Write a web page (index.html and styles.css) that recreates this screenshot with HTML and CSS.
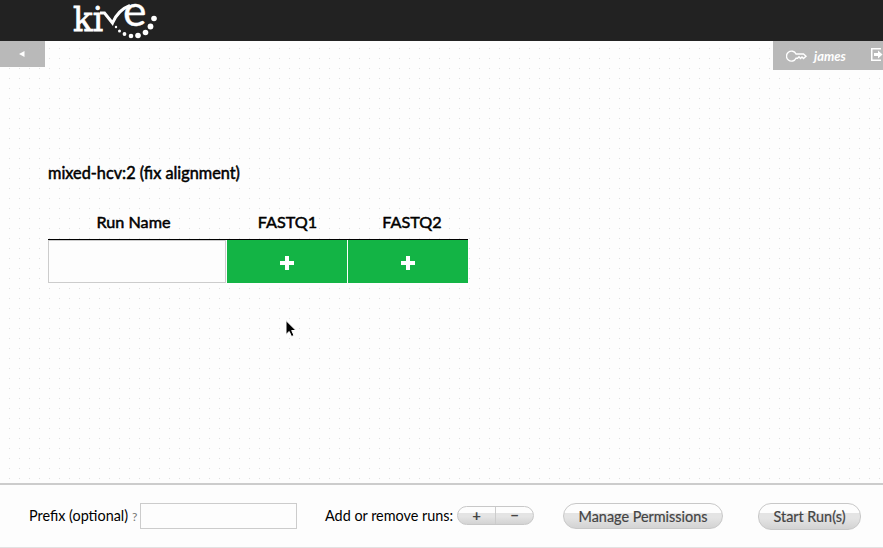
FILE: index.html
```html
<!DOCTYPE html>
<html lang="en">
<head>
<meta charset="utf-8">
<title>Kive</title>
<link rel="stylesheet" href="styles.css">
</head>
<body>
<header class="topbar">
  <svg class="logo" width="90" height="41" viewBox="70 0 90 41">
    <text class="logo-slab" x="73" y="30.500" textLength="30" lengthAdjust="spacingAndGlyphs">ki</text>
    <path d="M100 13h4.500L112.500 23Q118 10 130 5.500" fill="none" stroke="#fff" stroke-width="3"/>
    <text class="logo-e" x="123" y="25.500" textLength="23.500" lengthAdjust="spacingAndGlyphs">e</text>
    <g fill="#fff"><circle cx="116" cy="27" r="1.200"/><circle cx="119.500" cy="31" r="1.500"/><circle cx="124.500" cy="34" r="1.900"/><circle cx="131" cy="36" r="2.300"/><circle cx="138" cy="35.500" r="2.800"/><circle cx="145.500" cy="32.500" r="2.800"/><circle cx="150.500" cy="26.500" r="2.900"/><circle cx="154" cy="18.500" r="2.800"/></g>
  </svg>
</header>
<div class="subbar">
  <a class="back"><svg width="6" height="6" viewBox="0 0 6 6"><path d="M0 3L5.500 0v6z" fill="#fff"/></svg></a>
  <div class="user">
    <svg class="key" width="22" height="12" viewBox="0 0 22 12" fill="none" stroke="#fff" stroke-width="1.400"><path d="M10 4A5 5 0 1 0 10 8.300L11.500 8.300l1.500-1.500L14.500 8.500l1.500-1.500L17.500 8.500l2.500-2.300L17.500 4z"/></svg>
    <span class="name">james</span>
    <svg class="exit" width="12" height="13" viewBox="0 0 12 13"><path d="M10 .75H.75v11.500H10" fill="none" stroke="#fff" stroke-width="1.500"/><path d="M3 5h4V2.500L11.500 6.500 7 10.500V8H3z" fill="#fff"/></svg>
  </div>
</div>
<main class="content">
  <h1>mixed-hcv:2 (fix alignment)</h1>
  <table class="runs">
    <thead><tr><th class="c1">Run Name</th><th class="c2">FASTQ1</th><th class="c3">FASTQ2</th></tr></thead>
    <tbody><tr><td><div class="run-input"></div></td>
    <td><div class="add"><svg width="14" height="14"><path d="M5 0h4v5h5v4H9v5H5V9H0V5h5z" fill="#fff"/></svg></div></td>
    <td><div class="add"><svg width="14" height="14"><path d="M5 0h4v5h5v4H9v5H5V9H0V5h5z" fill="#fff"/></svg></div></td></tr></tbody>
  </table>
</main>
<footer class="controls">
  <span class="prefix">Prefix (optional)</span><span class="help">?</span><div class="field"></div>
  <span class="addrem">Add or remove runs:</span>
  <div class="pair"><span>+</span><span>−</span></div>
  <div class="btn manage"><span>Manage Permissions</span></div>
  <div class="btn start"><span>Start Run(s)</span></div>
</footer>
<svg class="cursor" width="14" height="20" viewBox="0 0 14 20"><path d="M2 1.500v14l3.200-3 2.300 5 2.500-1-2.300-5H12z" fill="#000" stroke="#fff"/></svg>
</body>
</html>
```
FILE: styles.css
```css
* { box-sizing: border-box; }
body {
  margin: 0;
  width: 883px;
  height: 548px;
  overflow: hidden;
  display: flex;
  flex-direction: column;
  font: 15px Lato, sans-serif;
  color: #000;
  background: #fdfdfd url("data:image/svg+xml,%3Csvg xmlns='http://www.w3.org/2000/svg' width='10' height='10'%3E%3Crect x='9' y='8' width='1' height='1' fill='%23dedede'/%3E%3C/svg%3E");
}
.topbar { height: 41px; flex: none; background: #222; padding-left: 70px; }
.logo { display: block; overflow: visible; }
.logo-slab { font: 34px "DejaVu Serif", serif; fill: #fff; stroke: #fff; stroke-width: .8; }
.logo-e { font: 42px Lato, sans-serif; fill: #fff; stroke: #fff; stroke-width: .3; }
.subbar { display: flex; justify-content: space-between; align-items: flex-start; height: 29px; flex: none; }
.back { width: 45px; height: 26px; background: #b9b9b9; display: flex; padding: 10px 0 0 19px; }
.user { width: 110px; height: 29px; background: #b9b9b9; color: #fff; display: flex; overflow: hidden; }
.key { flex: none; margin: 9px 0 0 13px; }
.name { width: 63px; flex: none; padding-left: 6px; line-height: 31px; font-size: 13px; font-weight: 700; font-style: italic; }
.exit { flex: none; margin-top: 7px; }
.content { flex: 1; padding: 92px 0 0 48px; }
h1 { margin: 0; font-size: 16.3px; line-height: 22px; font-weight: 400; height: 39px; -webkit-text-stroke: .5px #000; }
.runs { border-collapse: collapse; table-layout: fixed; width: 420px; }
th { padding: 4px 0 0; height: 38px; font-size: 16.2px; font-weight: 400; -webkit-text-stroke: .5px #000; border-bottom: 1px solid #000; }
td { padding: 0; }
.c1 { width: 179px; padding-right: 8px; }
.c2 { width: 121px; }
.c3 { width: 120px; padding-left: 8px; }
.run-input { width: 178px; height: 43px; border: 1px solid #ccc; background: #fdfdfd; }
.add { height: 43px; background: #13b445; display: flex; justify-content: center; align-items: center; padding-top: 3px; }
td:nth-child(2) .add { width: 120px; }
.controls { height: 65px; flex: none; background: #fdfdfd; border-top: 2px solid #ccc; box-shadow: inset 0 -1px #e2e2e2; display: flex; padding-left: 29px; line-height: 62px; white-space: nowrap; }
.prefix { width: 103px; font-size: 14.4px; }
.help { width: 8px; font-size: 12px; color: #777; line-height: 64px; }
.field { width: 157px; height: 26px; border: 1px solid #ccc; margin: 18px 28px 0 0; }
.addrem { width: 132px; font-size: 14.4px; }
.pair, .btn { color: #444; border: 1px solid #c8c8c8; background: linear-gradient(#fdfdfd 0 36%, #e4e4e4 36% 56%, #d3d3d3); border-radius: 13px; display: flex; justify-content: center; }
.pair { width: 77px; height: 19px; margin-top: 21px; line-height: 17px; overflow: hidden; font-weight: 700; }
.pair span { flex: 1; text-align: center; }
.pair span + span { border-left: 1px solid #ccc; }
.btn { height: 26px; margin-top: 18px; line-height: 26px; font-size: 14.4px; -webkit-text-stroke: .2px #444; }
.manage { width: 160px; margin-left: 29px; }
.start { width: 103px; height: 27px; margin-left: 35px; }
.cursor { position: absolute; left: 284px; top: 319px; }
```
